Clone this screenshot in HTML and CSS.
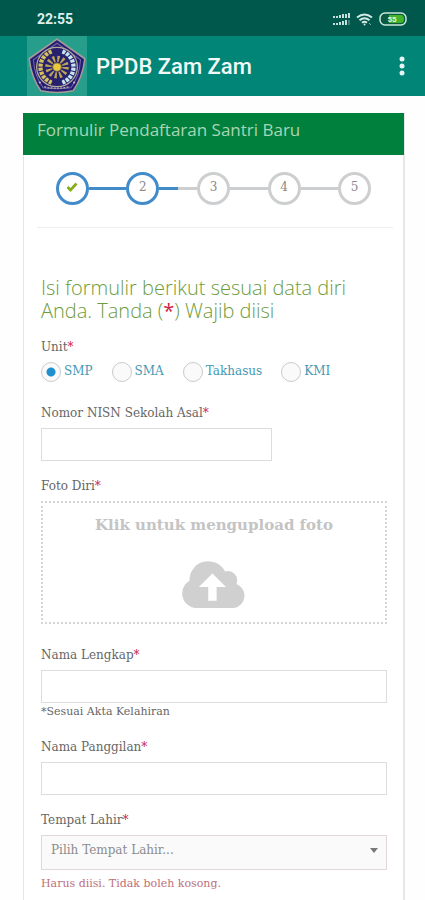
FILE: index.html
```html
<!DOCTYPE html>
<html lang="id">
<head>
  <meta charset="UTF-8" />
  <meta name="viewport" content="width=device-width, initial-scale=1.0" />
  <title>PPDB Zam Zam</title>
  <link rel="stylesheet" href="styles.css">
</head>
<body>
  <div class="status-bar">
    <span class="clock">22:55</span>
    <div class="status-icons">
      <svg width="17" height="13" viewBox="0 0 17 13" fill="#c5e0dc">
        <path d="M0 3h2v2H0zM3 3h2v2H3zM6 2h2v3H6zM9 1h2v4H9zM12 1h2v4h-2zM15 0h2v5h-2z" />
        <path d="M0 10h2v2H0zM3 10h2v2H3zM6 9h2v3H6zM9 8h2v4H9zM12 7h2v5h-2z" />
        <path d="M15 7h2v5h-2z" opacity=".3" />
      </svg>
      <svg width="17" height="13" viewBox="0 0 17 13" fill="none" stroke="#d3e9e6" stroke-width="2">
        <path d="M1 4.500Q8.500-1.500 16 4.500M3.500 7.200q5-4 10 0M6 9.700q2.500-2 5 0" />
        <circle cx="8.500" cy="11.500" r="1" fill="#d3e9e6" stroke="none" />
        <path d="M13 10l2 2" stroke-width="1" opacity=".6" />
      </svg>
      <svg width="28" height="14" viewBox="0 0 28 14">
        <rect x="1" y="1" width="26" height="12" rx="5" fill="#0a5a42" stroke="#c9e8dc" stroke-width="1.500" />
        <path d="M10 3h12q3 0 3 4t-3 4H10z" fill="#43b32b" />
        <text x="13" y="10" text-anchor="middle" class="battery-text">55</text>
      </svg>
    </div>
  </div>

  <header class="app-bar">
    <div class="app-logo">
      <svg width="60" height="58" viewBox="1 2 56 56" preserveAspectRatio="none">
        <path d="M29 4L55 23Q53 41 44 54Q29 57 14 54Q5 41 3 23Z" fill="#241b72" stroke="#a79b98" stroke-width="1.500" stroke-linejoin="round" />
        <path d="M29 8L51 24Q50 40 42 51Q29 53 16 51Q8 40 7 24Z" fill="none" stroke="#6f68a4" stroke-width="1" />
        <circle cx="29" cy="31" r="19" fill="#26206f" stroke="#b3aa9a" stroke-width="1.200" />
        <path d="M24 16A16 16 0 0 0 24 46" fill="none" stroke="#d4c05c" stroke-width="4" stroke-dasharray="3 1" />
        <path d="M34 16A16 16 0 0 1 34 46" fill="none" stroke="#c6e5ee" stroke-width="4" stroke-dasharray="3 1" />
        <circle cx="29" cy="31" r="8" fill="none" stroke="#b9a458" stroke-width="6" stroke-dasharray="2 2.190" />
        <circle cx="29" cy="31" r="4" fill="#e8ca3b" stroke="#8b7a48" stroke-width="1" />
        <path d="M17 50q12 3 24 0" fill="none" stroke="#a9a0ac" stroke-width="1.500" stroke-dasharray="2 1" />
        <circle cx="13" cy="46" r="1" fill="#c4bccb" />
        <circle cx="45" cy="46" r="1" fill="#c4bccb" />
      </svg>
    </div>
    <h1 class="app-title">PPDB Zam Zam</h1>
    <button class="menu-button" type="button" aria-label="Menu">
      <svg width="6" height="20" viewBox="0 0 6 20" fill="#e6f5f3">
        <circle cx="3" cy="3" r="2.500" />
        <circle cx="3" cy="10" r="2.500" />
        <circle cx="3" cy="17" r="2.500" />
      </svg>
    </button>
  </header>

  <main>
    <div class="card">
      <h2 class="card-title">Formulir Pendaftaran Santri Baru</h2>

      <ol class="steps">
        <li class="step done">
          <span class="step-circle">
            <svg width="12" height="10" viewBox="0 0 12 10"><path d="M1.500 5l3 3L10.500 1.500" fill="none" stroke="#83ad19" stroke-width="2.600" /></svg>
          </span>
        </li>
        <li class="step done"><span class="step-circle">2</span></li>
        <li class="step"><span class="step-circle">3</span></li>
        <li class="step"><span class="step-circle">4</span></li>
        <li class="step"><span class="step-circle">5</span></li>
      </ol>

      <form class="form">
        <h3 class="form-intro">Isi formulir berikut sesuai data diri Anda. Tanda (<span class="req">*</span>) Wajib diisi</h3>

        <fieldset class="field">
          <legend class="label">Unit<span class="req">*</span></legend>
          <div class="radios">
            <label class="radio"><input type="radio" name="unit" checked />SMP</label>
            <label class="radio"><input type="radio" name="unit" />SMA</label>
            <label class="radio"><input type="radio" name="unit" />Takhasus</label>
            <label class="radio"><input type="radio" name="unit" />KMI</label>
          </div>
        </fieldset>

        <div class="field">
          <label class="label" for="nisn">Nomor NISN Sekolah Asal<span class="req">*</span></label>
          <input class="input short" type="text" id="nisn" />
        </div>

        <div class="field photo">
          <span class="label" id="fotoLabel">Foto Diri<span class="req">*</span></span>
          <button class="upload" type="button" aria-describedby="fotoLabel">
            <span>Klik untuk mengupload foto</span>
            <svg width="64" height="48" viewBox="2 2 61 46">
              <path d="M14 47A14 14 0 0 1 9 21A18 18 0 0 1 43 12A9 9 0 0 1 54 24A12 12 0 0 1 52 47Z" fill="#d0d0d0" />
              <path d="M31 14L44 27H35V40H27V27H18Z" fill="#fff" />
            </svg>
          </button>
        </div>

        <div class="field name">
          <label class="label" for="nama">Nama Lengkap<span class="req">*</span></label>
          <input class="input" type="text" id="nama" />
          <small class="help">*Sesuai Akta Kelahiran</small>
        </div>

        <div class="field">
          <label class="label" for="panggilan">Nama Panggilan<span class="req">*</span></label>
          <input class="input" type="text" id="panggilan" />
        </div>

        <div class="field last">
          <label class="label" for="tempat">Tempat Lahir<span class="req">*</span></label>
          <div class="select-wrap">
            <select class="input select" id="tempat">
              <option>Pilih Tempat Lahir...</option>
            </select>
          </div>
          <small class="error">Harus diisi. Tidak boleh kosong.</small>
        </div>
      </form>
    </div>
  </main>
</body>
</html>
```
FILE: styles.css
```css
* { box-sizing: border-box; }

body {
  margin: 0;
  min-height: 100vh;
  display: flex;
  flex-direction: column;
  font-family: 'DejaVu Serif', serif;
  font-size: 12px;
  color: #666;
  background: #fefefe;
}

.status-bar {
  height: 36px;
  padding: 2px 18px 0 37px;
  display: flex;
  align-items: center;
  justify-content: space-between;
  background: #00574b;
}

.clock {
  font: bold 14px Roboto, sans-serif;
  color: #dcefec;
}

.status-icons {
  display: flex;
  align-items: center;
  gap: 6px;
}

.battery-text {
  font: bold 8px Roboto, sans-serif;
  fill: #e4f6d6;
}

.app-bar {
  height: 60px;
  padding: 0 16px 0 27px;
  display: flex;
  align-items: center;
  background: #008577;
}

.app-logo {
  width: 60px;
  height: 60px;
  display: flex;
  align-items: center;
  justify-content: center;
  background: #279d8c;
}

.app-title {
  margin: 0 0 0 9px;
  font: 500 22px Roboto, sans-serif;
  color: #f2faf9;
}

.menu-button {
  display: flex;
  margin-left: auto;
  padding: 4px;
  background: none;
  border: none;
  cursor: pointer;
}

main {
  flex: 1;
  display: flex;
  padding: 17px 20px 0 23px;
}

.card {
  flex: 1;
  border: solid #e6e6e6;
  border-width: 0 2px 0 1px;
  background: #fff;
}

.card-title {
  margin: 0 -1px;
  padding: 5px 14px 13px;
  font: 400 17px/24px 'Open Sans', sans-serif;
  color: #a9d5b5;
  background: #00803d;
}

/* langkah formulir */
.steps {
  list-style: none;
  display: grid;
  grid-template-columns: repeat(5, 1fr);
  margin: 0 10px 0 13px;
  padding: 17px 3px 22px 0;
  border-bottom: 1px solid #eee;
}

.step {
  display: flex;
  align-items: center;
}

.step::before,
.step::after {
  content: '';
  flex: 1;
  height: 3px;
  background: #ccced0;
}

.step.done::before,
.step.done::after { background: #428bca; }

.step:first-child::before,
.step:last-child::after { background: none; }

.step-circle {
  width: 33px;
  height: 33px;
  display: flex;
  align-items: center;
  justify-content: center;
  border: 3px solid #ccced0;
  border-radius: 50%;
  padding-bottom: 3px;
  color: #888;
}

.step.done .step-circle { border-color: #428bca; }

.form {
  padding: 48px 16px 0 17px;
}

.form-intro {
  margin: 0 0 17px;
  font: 300 20px/23px 'Open Sans', sans-serif;
  color: #6d9c3c;
}

.req { color: #cc2346; }

.form-intro .req { font-weight: 400; }

.field {
  margin: 0 0 17px;
  padding: 0;
  border: none;
}

.label {
  display: block;
  padding: 0;
  margin-bottom: 7px;
  line-height: 16px;
}

.radios {
  display: flex;
  gap: 19px;
}

.radio {
  display: flex;
  align-items: flex-start;
  gap: 3px;
  line-height: 18px;
  color: #4598b4;
}

.radio input {
  appearance: none;
  width: 20px;
  height: 20px;
  margin: 0;
  border: 1px solid #c8cbce;
  border-radius: 50%;
  background: #fafafa;
}

.radio input:checked {
  background: radial-gradient(circle, #1e90cb 4px, #fafafa 5px);
}

fieldset.field { margin-bottom: 23px; }

.input {
  display: block;
  width: 100%;
  height: 33px;
  padding: 0 9px;
  font: inherit;
  color: #8c8c8c;
  background: #fff;
  border: 1px solid #dcdcdc;
  border-radius: 0;
}

.input.short { width: 231px; }

.upload {
  width: 100%;
  height: 123px;
  padding: 12px 0 13px;
  display: flex;
  flex-direction: column;
  align-items: center;
  justify-content: space-between;
  font: bold 15px/20px 'DejaVu Serif', serif;
  color: #c4c4c4;
  background: #fff;
  border: 2px dotted #d6d6d6;
  cursor: pointer;
}

.photo { margin-bottom: 23px; }

.name { margin-bottom: 19px; }

.help,
.error {
  display: block;
  font-size: 11px;
  line-height: 17px;
}

.select-wrap { position: relative; }

.select-wrap::after {
  content: '';
  position: absolute;
  right: 9px;
  top: 13px;
  border: 4px solid transparent;
  border-top: 5px solid #777;
  border-bottom: 0;
  pointer-events: none;
}

.select {
  appearance: none;
  height: 35px;
  padding-bottom: 5px;
  background: #fafafa;
  border-color: #e2d6d6;
}

.error {
  margin-top: 5px;
  color: #bd7078;
}

.field.last { margin-bottom: 0; }
```
